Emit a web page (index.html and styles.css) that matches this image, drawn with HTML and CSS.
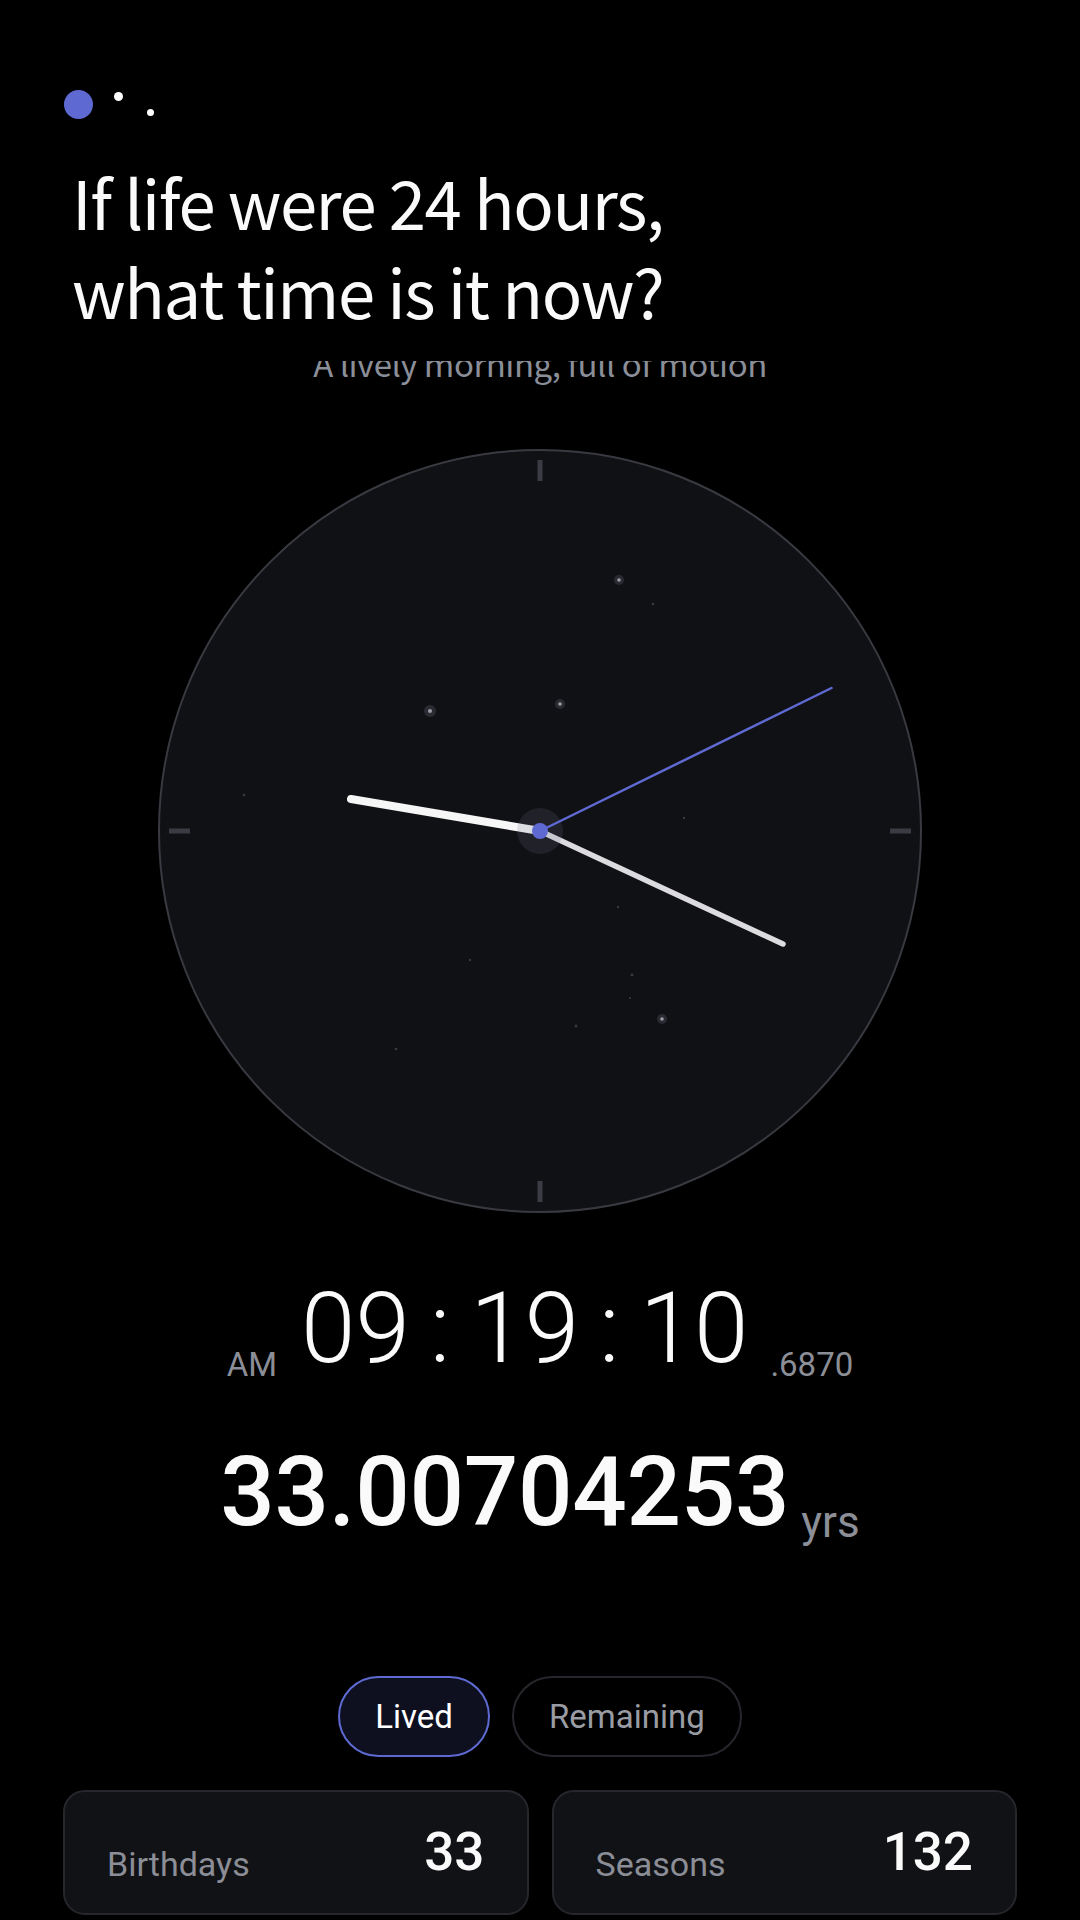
FILE: index.html
```html
<!DOCTYPE html>
<html lang="en">
<head>
<meta charset="utf-8">
<title>Life clock</title>
<link rel="stylesheet" href="styles.css">
</head>
<body>
<main class="app">
  <header class="header">
    <svg class="logo" width="100" height="30" viewBox="0 0 100 30" aria-hidden="true">
      <circle cx="14.5" cy="14.5" r="14.5" fill="#5e6ad2"/>
      <circle cx="54.5" cy="6.5" r="4.5" fill="#ffffff"/>
      <circle cx="86.5" cy="22.5" r="3.5" fill="#ffffff"/>
    </svg>
    <h1 class="title">If life were 24 hours,<br>what time is it now?</h1>
  </header>

  <div class="subtitle-clip">
    <p class="subtitle">A lively morning, full of motion</p>
  </div>

  <div class="clock">
    <svg width="764" height="764" viewBox="0 0 764 764" aria-hidden="true">
      <circle cx="382" cy="382" r="381" fill="#101114" stroke="#393a41" stroke-width="2"/>
      <g stroke="#3b3c43" stroke-width="5">
        <line x1="382" y1="11" x2="382" y2="32"/>
        <line x1="382" y1="732" x2="382" y2="753"/>
        <line x1="11" y1="382" x2="32" y2="382"/>
        <line x1="732" y1="382" x2="753" y2="382"/>
      </g>
      <g class="stars">
        <circle cx="461" cy="131" r="5" fill="#2a2b32"/><circle cx="461" cy="131" r="1.8" fill="#9c9da4"/>
        <circle cx="272" cy="262" r="6" fill="#2a2b32"/><circle cx="272" cy="262" r="2" fill="#9c9da4"/>
        <circle cx="402" cy="255" r="5" fill="#2a2b32"/><circle cx="402" cy="255" r="1.8" fill="#9c9da4"/>
        <circle cx="504" cy="570" r="5" fill="#2a2b32"/><circle cx="504" cy="570" r="1.8" fill="#9c9da4"/>
        <g fill="#3a3b42">
          <circle cx="495" cy="155" r="1.3"/>
          <circle cx="86" cy="346" r="1.3"/>
          <circle cx="526" cy="369" r="1.2"/>
          <circle cx="460" cy="458" r="1.2"/>
          <circle cx="312" cy="511" r="1.2"/>
          <circle cx="474" cy="526" r="1.4"/>
          <circle cx="472" cy="549" r="1.1"/>
          <circle cx="418" cy="577" r="1.4"/>
          <circle cx="238" cy="600" r="1.3"/>
        </g>
      </g>
      <line x1="382" y1="382" x2="193" y2="350" stroke="#f6f6f7" stroke-width="8" stroke-linecap="round"/>
      <line x1="382" y1="382" x2="625" y2="495" stroke="#dcdcdf" stroke-width="5.5" stroke-linecap="round"/>
      <circle cx="382" cy="382" r="23" fill="rgba(110,112,145,0.18)"/>
      <line x1="382" y1="382" x2="673.5" y2="239" stroke="#5e6ad2" stroke-width="2.5" stroke-linecap="round"/>
      <circle cx="382" cy="382" r="8" fill="#5e6ad2"/>
    </svg>
  </div>

  <div class="time"><span class="time-small">AM</span><span class="digits">09</span><span class="colon">:</span><span class="digits">19</span><span class="colon">:</span><span class="digits">10</span><span class="time-small frac">.6870</span></div>

  <div class="age"><span class="age-value">33.00704253</span><span class="age-unit">yrs</span></div>

  <div class="toggle">
    <button class="pill pill-active" type="button">Lived</button>
    <button class="pill" type="button">Remaining</button>
  </div>

  <section class="cards">
    <div class="card">
      <span class="card-label">Birthdays</span>
      <span class="card-value">33</span>
    </div>
    <div class="card">
      <span class="card-label">Seasons</span>
      <span class="card-value">132</span>
    </div>
  </section>
</main>
</body>
</html>
```

FILE: styles.css
```css
* { box-sizing: border-box; }

html, body {
  margin: 0;
  padding: 0;
  background: #000;
}

body {
  width: 1080px;
  height: 1920px;
  overflow: hidden;
  font-family: Roboto, "Noto Sans", sans-serif;
  color: #f7f7f8;
}

.app {
  padding-top: 90px;
}

.header {
  display: flex;
  flex-direction: column;
}

.logo {
  display: block;
  margin-left: 64px;
}

.title {
  margin: 36px 0 0 72px;
  font-family: "Noto Sans CJK KR", "Noto Sans", sans-serif;
  font-weight: 400;
  font-size: 67px;
  letter-spacing: -1.4px;
  line-height: 89px;
  color: #fafafa;
}

.subtitle-clip {
  margin-top: 27px;
  height: 30px;
  overflow: hidden;
}

.subtitle {
  margin: -14px 0 0 0;
  text-align: center;
  font-family: "Noto Sans CJK KR", "Noto Sans", sans-serif;
  font-size: 33px;
  letter-spacing: -0.5px;
  line-height: 33px;
  color: #8a8e98;
}

.clock {
  margin: 58px auto 0;
  width: 764px;
  height: 764px;
}

.clock svg {
  display: block;
}

.time {
  margin-top: 67px;
  text-align: center;
  line-height: 98px;
  height: 100px;
  white-space: nowrap;
}

.digits {
  font-size: 98px;
  font-weight: 300;
  color: #fafafa;
}

.colon {
  font-size: 98px;
  font-weight: 300;
  color: #fafafa;
  margin: 0 20px;
}

.time-small {
  font-size: 33px;
  line-height: 33px;
  color: #8b8e96;
  vertical-align: -14px;
  margin-right: 24px;
}

.time-small.frac {
  margin-right: 0;
  margin-left: 22px;
}

.age {
  margin-top: 64px;
  text-align: center;
  line-height: 96px;
  height: 96px;
  white-space: nowrap;
}

.age-value {
  font-size: 96px;
  font-weight: 500;
  letter-spacing: -0.3px;
  color: #fafafa;
}

.age-unit {
  font-size: 44px;
  line-height: 44px;
  color: #8c8f97;
  vertical-align: -12px;
  margin-left: 12px;
}

.toggle {
  margin-top: 136px;
  display: flex;
  justify-content: center;
  gap: 22px;
}

.pill {
  height: 81px;
  padding: 0 35px;
  border-radius: 41px;
  border: 2px solid #26272d;
  background: #000;
  color: #9a9ca3;
  font-family: Roboto, sans-serif;
  font-size: 33px;
  line-height: 1;
  display: flex;
  align-items: center;
}

.pill-active {
  border-color: #5e6ad2;
  background: #0e1020;
  color: #ffffff;
}

.cards {
  margin-top: 33px;
  padding: 0 63px;
  display: grid;
  grid-template-columns: 1fr 1fr;
  gap: 23px;
}

.card {
  height: 125px;
  border: 2px solid #26272d;
  border-radius: 22px;
  background: #111215;
  display: flex;
  justify-content: space-between;
  align-items: flex-end;
  padding: 0 42px 34px 42px;
}

.card-label {
  font-size: 34px;
  line-height: 34px;
  color: #8b8e96;
  margin-bottom: -2px;
}

.card-value {
  font-size: 53px;
  line-height: 53px;
  font-weight: 500;
  color: #fafafa;
}
```
